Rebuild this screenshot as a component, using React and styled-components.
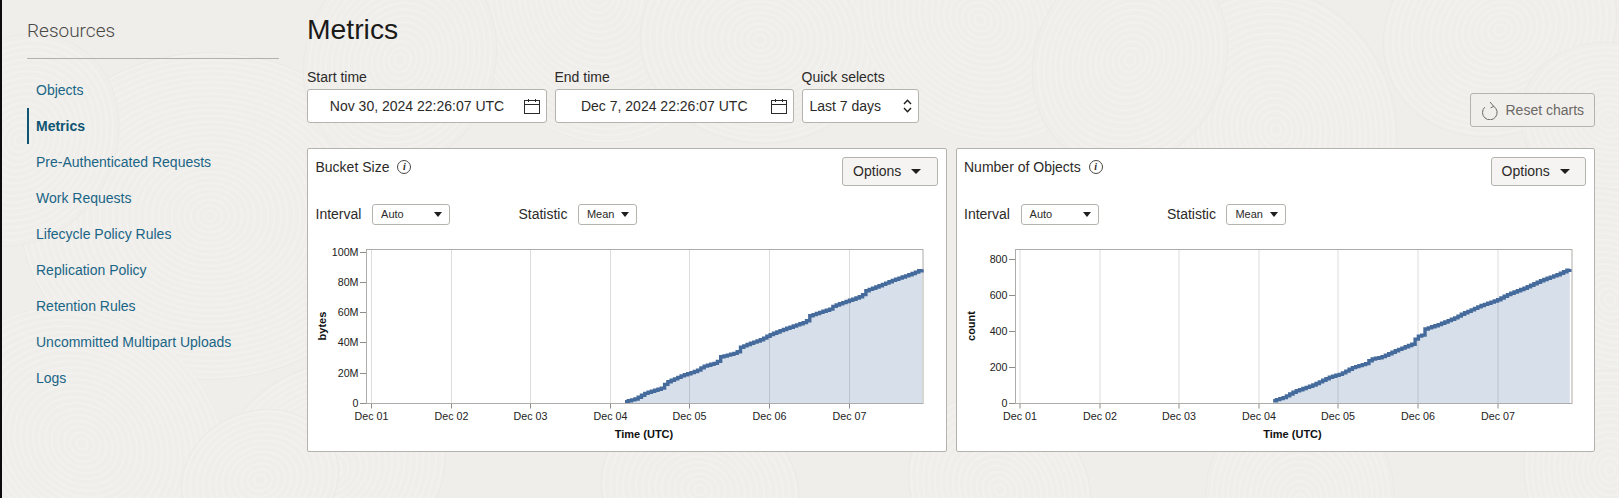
import React from "react";
import styled, { createGlobalStyle } from "styled-components";

const Global = createGlobalStyle`
  html, body { margin: 0; padding: 0; background: #efeeeb; }
  body { font-family: "Liberation Sans", Arial, sans-serif; color: #1f1e1c; }
`;

const Page = styled.div`
  position: relative;
  display: flex;
  width: 1619px;
  height: 498px;
  box-sizing: border-box;
  overflow: hidden;
  padding-left: 25px;
  border-left: 2px solid #0c0c0c;
  gap: 28px;
  background: #efeeeb;
`;

const Backdrop = styled.svg`
  position: absolute;
  left: -2px;
  top: 0;
  z-index: 0;
`;

const Sidebar = styled.aside`
  position: relative;
  z-index: 1;
  flex: 0 0 252px;
`;

const SideTitle = styled.h2`
  margin: 0;
  height: 59px;
  box-sizing: border-box;
  padding-top: 20px;
  border-bottom: 1px solid #b3b1ac;
  font: 300 19px/22px Roboto, "Liberation Sans", sans-serif;
  color: #4a4845;
`;

const NavList = styled.nav`
  display: flex;
  flex-direction: column;
  padding-top: 13px;
`;

const NavItem = styled.a`
  display: flex;
  align-items: center;
  height: 36px;
  box-sizing: border-box;
  padding-left: ${(p) => (p.$active ? "7px" : "9px")};
  border-left: ${(p) => (p.$active ? "2px solid #0f5470" : "none")};
  font-size: 14px;
  font-weight: ${(p) => (p.$active ? 700 : 400)};
  color: ${(p) => (p.$active ? "#0f5470" : "#1a6585")};
`;

const Main = styled.main`
  position: relative;
  z-index: 1;
  flex: 0 0 1287.5px;
`;

const PageTitle = styled.h1`
  margin: 0;
  height: 66px;
  box-sizing: border-box;
  padding-top: 13px;
  font: 400 28.3px/32px "Liberation Sans", sans-serif;
  color: #1b1a18;
`;

const FilterRow = styled.div`
  display: flex;
  align-items: flex-end;
  gap: 7.5px;
  height: 57px;
`;

const Field = styled.label`
  display: flex;
  flex-direction: column;
  width: ${(p) => p.$width}px;
`;

const FieldLabel = styled.span`
  height: 22px;
  padding-top: 1.5px;
  box-sizing: border-box;
  font-size: 14px;
  line-height: 16px;
  color: #2c2a28;
`;

const InputBox = styled.div`
  display: flex;
  align-items: center;
  height: 34px;
  box-sizing: border-box;
  padding: 0 6px 0 ${(p) => p.$left || 0}px;
  background: #fff;
  border: 1px solid #b5b3ae;
  border-radius: 3px;
  font-size: 14px;
  color: #2c2a28;
`;

const DateText = styled.span`
  flex: 1;
  text-align: center;
  padding-left: 2px;
`;

const QuickText = styled.span`
  flex: 1;
`;

const ResetButton = styled.button`
  display: flex;
  align-items: center;
  gap: 7px;
  margin-left: auto;
  margin-bottom: -4.4px;
  width: 125.5px;
  height: 34.4px;
  box-sizing: border-box;
  padding: 0 0 0 11px;
  background: #f1efec;
  border: 1px solid #b5b3ae;
  border-radius: 3px;
  font: 400 14px "Liberation Sans", sans-serif;
  color: #6b6865;
`;

const Charts = styled.div`
  display: flex;
  gap: 9px;
  margin-top: 25px;
`;

const Panel = styled.section`
  flex: 1;
  height: 304px;
  box-sizing: border-box;
  background: #fff;
  border: 1px solid #b5b3ae;
  border-radius: 2px;
`;

const PanelHeader = styled.header`
  display: flex;
  justify-content: space-between;
  align-items: flex-start;
  padding: 7.5px 8px 0 7.5px;
`;

const PanelTitle = styled.div`
  display: flex;
  align-items: center;
  gap: 8px;
  height: 20px;
  font-size: 14px;
  color: #2c2a28;
`;

const InfoIcon = styled.span`
  display: inline-flex;
  align-items: center;
  justify-content: center;
  width: 14px;
  height: 14px;
  box-sizing: border-box;
  border: 1px solid #4a4845;
  border-radius: 50%;
  font: italic 700 10px "Liberation Serif", serif;
  color: #2c2a28;
`;

const OptionsButton = styled.button`
  display: flex;
  align-items: center;
  gap: 10px;
  width: 95.4px;
  height: 29.4px;
  box-sizing: border-box;
  padding: 0 0 0 10px;
  background: #f5f4f2;
  border: 1px solid #b5b3ae;
  border-radius: 3px;
  font: 400 14px "Liberation Sans", sans-serif;
  color: #2c2a28;
`;

const Caret = styled.i`
  flex: none;
  width: 0;
  height: 0;
  border-left: ${(p) => p.$size}px solid transparent;
  border-right: ${(p) => p.$size}px solid transparent;
  border-top: ${(p) => Math.round(p.$size * 1.05)}px solid #1f1e1c;
`;

const Controls = styled.div`
  display: flex;
  align-items: center;
  height: 20.4px;
  margin-top: 18.4px;
  padding-left: 7.5px;
`;

const ControlLabel = styled.span`
  font-size: 14px;
  color: #2c2a28;
`;

const MiniSelect = styled.div`
  display: flex;
  align-items: center;
  justify-content: space-between;
  width: ${(p) => p.$width}px;
  height: 20.4px;
  box-sizing: border-box;
  margin: 0 ${(p) => p.$after || 0}px 0 ${(p) => p.$before}px;
  padding: 0 7px 0 8px;
  background: #fff;
  border: 1px solid #b5b3ae;
  border-radius: 3px;
  font-size: 11px;
  color: #2c2a28;
`;

const ChartFrame = styled.svg`
  display: block;
  margin-top: 15.5px;
  font-family: "Liberation Sans", Arial, sans-serif;
`;

const patches = [
  [210, 216, 190], [82, 444, 150], [597, -6, 150], [400, 60, 110], [330, 470, 120],
  [760, 40, 120], [980, 20, 130], [1276, 130, 140], [1130, 60, 110], [1500, 30, 120],
  [1610, 120, 90], [1610, 300, 120], [1610, 470, 100], [20, 140, 110], [260, 480, 80],
  [700, 490, 100], [1000, 490, 100], [1300, 500, 110],
];

function Texture() {
  return (
    <Backdrop width="1619" height="498" aria-hidden="true">
      {patches.map(([cx, cy, r], i) => {
        const rings = [];
        for (let q = 6; q < r; q += 6.5) rings.push(q);
        return (
          <g key={i} transform={`rotate(${i * 37} ${cx} ${cy})`}>
            <ellipse cx={cx} cy={cy} rx={r} ry={r * 0.86} fill="#efeeeb" stroke="#ebeae6" strokeWidth="1" />
            {rings.map((q) => (
              <ellipse key={q} cx={cx} cy={cy} rx={q} ry={q * 0.86} fill="none" stroke="#f2f1ee" strokeWidth="2" />
            ))}
          </g>
        );
      })}
    </Backdrop>
  );
}

function CalendarIcon() {
  return (
    <svg width="16" height="15" viewBox="0 0 16 15" fill="none" stroke="#2c2a28" strokeWidth="1" aria-hidden="true">
      <rect x="0.5" y="1.5" width="15" height="13" />
      <path d="M0.5 5.5H15.5M4.5 0V3M11.5 0V3" />
    </svg>
  );
}

function SortIcon() {
  return (
    <svg width="9" height="14" viewBox="0 0 9 14" fill="none" stroke="#1f1e1c" strokeWidth="1.4" aria-hidden="true">
      <path d="M1 5L4.5 1.2L8 5M1 9L4.5 12.8L8 9" />
    </svg>
  );
}

function ResetIcon() {
  return (
    <svg width="17" height="19" viewBox="0 0 17 19" fill="none" stroke="#6b6865" strokeWidth="1" aria-hidden="true">
      <path d="M11.8 5.4A7.3 7.3 0 1 1 2.8 6.2" />
      <path d="M8 1L11.8 5.4L8.6 6.8" />
    </svg>
  );
}

function stepPath(points) {
  const first = points[0];
  const last = points[points.length - 1];
  const at = (x) => {
    for (let i = 1; i < points.length; i++) {
      if (x <= points[i][0]) {
        const [x0, y0] = points[i - 1];
        const [x1, y1] = points[i];
        return y0 + ((x - x0) / (x1 - x0)) * (y1 - y0);
      }
    }
    return last[1];
  };
  let d = `M${first[0]} ${first[1].toFixed(1)}`;
  for (let x = first[0] + 3.3; x < last[0]; x += 3.3) {
    d += `H${x.toFixed(1)}V${at(x).toFixed(1)}`;
  }
  d += `H${last[0]}V${last[1].toFixed(1)}`;
  return d;
}

const PLOT_TOP = 249.5;
const PLOT_BOTTOM = 403.5;

function TimeChart({ origin, width, axisX, rightX, yTitle, yTitleX, yTicks, grid, points, xTitleX }) {
  const line = stepPath(points);
  const first = points[0][0];
  return (
    <ChartFrame width={width} height="205" viewBox={`${origin} 240 ${width} 205`}>
      <rect x={axisX + 0.5} y={PLOT_TOP} width={rightX - axisX - 0.5} height={PLOT_BOTTOM - PLOT_TOP} fill="none" stroke="#aeaca8" />
      {grid.map((x) => (
        <g key={x}>
          <line x1={x} x2={x} y1={PLOT_TOP + 0.5} y2={PLOT_BOTTOM} stroke="#dcdcdc" />
          <line x1={x} x2={x} y1={PLOT_BOTTOM} y2={PLOT_BOTTOM + 5} stroke="#8f8d89" />
        </g>
      ))}
      <path d={`${line}V${PLOT_BOTTOM}H${first}Z`} fill="#4a6f9f" fillOpacity="0.22" />
      <path d={line} fill="none" stroke="#456b9c" strokeWidth="3.4" strokeLinejoin="miter" />
      <line x1={axisX} x2={rightX} y1={PLOT_BOTTOM} y2={PLOT_BOTTOM} stroke="#aeaca8" />
      {yTicks.map(([label, y]) => (
        <g key={label}>
          <line x1={axisX - 6} x2={axisX} y1={y} y2={y} stroke="#8f8d89" />
          <text x={axisX - 7.5} y={y + 3.9} textAnchor="end" fontSize="10.7" fill="#222">{label}</text>
        </g>
      ))}
      {grid.map((x, i) => (
        <text key={x} x={x} y={420.3} textAnchor="middle" fontSize="10.7" fill="#222">{`Dec 0${i + 1}`}</text>
      ))}
      <text x={xTitleX} y={438} textAnchor="middle" fontSize="11" fontWeight="700" fill="#111">Time (UTC)</text>
      <text transform={`translate(${yTitleX} 326) rotate(-90)`} textAnchor="middle" fontSize="11" fontWeight="700" fill="#111">{yTitle}</text>
    </ChartFrame>
  );
}

const toAbs = (ox, list) => list.map(([x, y]) => [ox + x / 3, 240 + y / 3]);

const bytesPoints = toAbs(610, [
  [45, 485], [75, 477], [105, 460], [155, 444], [168, 428], [215, 407], [260, 392], [280, 379],
  [320, 368], [330, 351], [380, 338], [388, 323], [420, 310], [450, 300], [478, 285], [510, 272],
  [550, 258], [588, 245], [597, 228], [660, 207], [670, 198], [718, 181], [755, 168], [765, 153],
  [800, 140], [850, 120], [900, 103], [936, 88],
]);

const countPoints = toAbs(1240, [
  [98, 482], [130, 472], [160, 455], [215, 436], [265, 412], [300, 402], [335, 383], [375, 371],
  [390, 358], [420, 352], [470, 330], [515, 312], [528, 290], [545, 285], [550, 268], [590, 255],
  [640, 235], [660, 224], [720, 197], [770, 180], [800, 164], [850, 145], [900, 122], [950, 104], [988, 87],
]);

const charts = [
  {
    title: "Bucket Size",
    chart: {
      origin: 308, axisX: 366, rightX: 923, yTitle: "bytes", yTitleX: 326, xTitleX: 644,
      yTicks: [["100M", 252.5], ["80M", 282.5], ["60M", 312.5], ["40M", 342.5], ["20M", 373.5], ["0", 403.5]],
      grid: [371.5, 451.5, 530.5, 610.5, 689.5, 769.5, 849.5],
      points: bytesPoints,
    },
  },
  {
    title: "Number of Objects",
    chart: {
      origin: 956.5, axisX: 1014.5, rightX: 1571.5, yTitle: "count", yTitleX: 974.5, xTitleX: 1292,
      yTicks: [["800", 259.5], ["600", 295.5], ["400", 331.5], ["200", 367.5], ["0", 403.5]],
      grid: [1019.5, 1099.5, 1178.5, 1258.5, 1337.5, 1417.5, 1497.5],
      points: countPoints,
    },
  },
];

const links = [
  "Objects", "Metrics", "Pre-Authenticated Requests", "Work Requests", "Lifecycle Policy Rules",
  "Replication Policy", "Retention Rules", "Uncommitted Multipart Uploads", "Logs",
];

export default function App() {
  return (
    <Page>
      <Global />
      <Texture />
      <Sidebar>
        <SideTitle>Resources</SideTitle>
        <NavList>
          {links.map((l) => (
            <NavItem key={l} $active={l === "Metrics"}>{l}</NavItem>
          ))}
        </NavList>
      </Sidebar>
      <Main>
        <PageTitle>Metrics</PageTitle>
        <FilterRow>
          <Field $width={240}>
            <FieldLabel>Start time</FieldLabel>
            <InputBox>
              <DateText>Nov 30, 2024 22:26:07 UTC</DateText>
              <CalendarIcon />
            </InputBox>
          </Field>
          <Field $width={239.5}>
            <FieldLabel>End time</FieldLabel>
            <InputBox>
              <DateText>Dec 7, 2024 22:26:07 UTC</DateText>
              <CalendarIcon />
            </InputBox>
          </Field>
          <Field $width={117.5}>
            <FieldLabel>Quick selects</FieldLabel>
            <InputBox $left={7}>
              <QuickText>Last 7 days</QuickText>
              <SortIcon />
            </InputBox>
          </Field>
          <ResetButton>
            <ResetIcon />
            Reset charts
          </ResetButton>
        </FilterRow>
        <Charts>
          {charts.map(({ title, chart }) => (
            <Panel key={title}>
              <PanelHeader>
                <PanelTitle>
                  {title}
                  <InfoIcon>i</InfoIcon>
                </PanelTitle>
                <OptionsButton>
                  Options
                  <Caret $size={5} />
                </OptionsButton>
              </PanelHeader>
              <Controls>
                <ControlLabel>Interval</ControlLabel>
                <MiniSelect $width={78} $before={10.7} $after={68.3}>
                  Auto
                  <Caret $size={4.5} />
                </MiniSelect>
                <ControlLabel>Statistic</ControlLabel>
                <MiniSelect $width={59.4} $before={10.5}>
                  Mean
                  <Caret $size={4.5} />
                </MiniSelect>
              </Controls>
              <TimeChart width={637.5} {...chart} />
            </Panel>
          ))}
        </Charts>
      </Main>
    </Page>
  );
}
